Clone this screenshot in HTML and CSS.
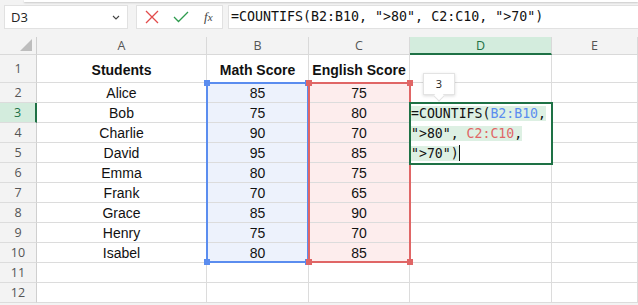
FILE: index.html
```html
<!DOCTYPE html>
<html lang="en">
<head>
    <meta charset="UTF-8">
    <title>COUNTIFS</title>
    <link rel="stylesheet" href="styles.css">
</head>
<body>
    <div class="topline"></div>

    <!-- Formula bar -->
    <div class="formula-bar">
        <div class="name-box">
            <span>D3</span>
            <svg class="chev" width="8" height="5" viewBox="0 0 8 5"><path d="M1 1 L4 4 L7 1" fill="none" stroke="#444" stroke-width="1.1"/></svg>
        </div>
        <div class="fx-buttons">
            <svg width="14" height="14" viewBox="0 0 14 14"><path d="M1 1 L13 13 M13 1 L1 13" stroke="#e24b4b" stroke-width="1.3"/></svg>
            <svg width="16" height="12" viewBox="0 0 16 12"><path d="M1 6 L5.5 10.5 L15 1" fill="none" stroke="#2e9b4e" stroke-width="1.3"/></svg>
            <span class="fx"><i>f</i><i>x</i></span>
        </div>
        <div class="formula-input">=COUNTIFS(B2:B10, "&gt;80", C2:C10, "&gt;70")</div>
    </div>

    <!-- Sheet -->
    <div class="sheet">
        <div class="grid">
            <div class="corner"><span class="tri"></span></div>
            <div class="col-head">A</div>
            <div class="col-head">B</div>
            <div class="col-head">C</div>
            <div class="col-head active">D</div>
            <div class="col-head">E</div>

            <div class="row-head tall">1</div>
            <div class="cell tall bold">Students</div>
            <div class="cell tall bold">Math Score</div>
            <div class="cell tall bold">English Score</div>
            <div class="cell tall"></div>
            <div class="cell tall"></div>

            <div class="row-head">2</div><div class="cell">Alice</div><div class="cell blue">85</div><div class="cell red">75</div><div class="cell"></div><div class="cell"></div>
            <div class="row-head active">3</div><div class="cell">Bob</div><div class="cell blue">75</div><div class="cell red">80</div><div class="cell"></div><div class="cell"></div>
            <div class="row-head">4</div><div class="cell">Charlie</div><div class="cell blue">90</div><div class="cell red">70</div><div class="cell"></div><div class="cell"></div>
            <div class="row-head">5</div><div class="cell">David</div><div class="cell blue">95</div><div class="cell red">85</div><div class="cell"></div><div class="cell"></div>
            <div class="row-head">6</div><div class="cell">Emma</div><div class="cell blue">80</div><div class="cell red">75</div><div class="cell"></div><div class="cell"></div>
            <div class="row-head">7</div><div class="cell">Frank</div><div class="cell blue">70</div><div class="cell red">65</div><div class="cell"></div><div class="cell"></div>
            <div class="row-head">8</div><div class="cell">Grace</div><div class="cell blue">85</div><div class="cell red">90</div><div class="cell"></div><div class="cell"></div>
            <div class="row-head">9</div><div class="cell">Henry</div><div class="cell blue">75</div><div class="cell red">70</div><div class="cell"></div><div class="cell"></div>
            <div class="row-head">10</div><div class="cell">Isabel</div><div class="cell blue">80</div><div class="cell red">85</div><div class="cell"></div><div class="cell"></div>
            <div class="row-head">11</div><div class="cell"></div><div class="cell"></div><div class="cell"></div><div class="cell"></div><div class="cell"></div>
            <div class="row-head">12</div><div class="cell"></div><div class="cell"></div><div class="cell"></div><div class="cell"></div><div class="cell"></div>
        </div>

        <!-- Range highlights -->
        <div class="range range-b">
            <span class="h tl"></span><span class="h tr"></span><span class="h bl"></span><span class="h br"></span>
        </div>
        <div class="range range-c">
            <span class="h tl"></span><span class="h tr"></span><span class="h bl"></span><span class="h br"></span>
        </div>

        <!-- Tooltip -->
        <div class="tip">3</div>

        <!-- In-cell editor -->
        <div class="editor"><span class="sel">=COUNTIFS(<b class="ref-b">B2:B10</b>, "&gt;80", <b class="ref-c">C2:C10</b>, "&gt;70")</span><span class="caret"></span></div>
    </div>
</body>
</html>
```

FILE: styles.css
```css
body {
    margin: 0;
    background-color: #f3f3f3;
    font-family: "Liberation Sans", Arial, sans-serif;
    overflow: hidden;
}
.topline {
    height: 2px;
    background-color: #fff;
    box-shadow: 0 1px 2px rgba(0, 0, 0, 0.18);
    margin: 0 0 0 24px;
}
/* Formula bar */
.formula-bar {
    display: flex;
    height: 24px;
    margin-top: 3px;
    padding-left: 4px;
}
.name-box {
    background-color: #fff;
    border: 1px solid #e1e1e1;
    display: flex;
    align-items: center;
    justify-content: space-between;
    padding: 0 7px 0 6px;
    box-sizing: border-box;
    width: 124px;
    font-family: "Open Sans", sans-serif;
    font-size: 13px;
    color: #222;
}
.fx-buttons {
    margin-left: 8px;
    width: 87px;
    box-sizing: border-box;
    background-color: #fff;
    border: 1px solid #e1e1e1;
    display: flex;
    align-items: center;
    gap: 14px;
    padding-left: 8px;
}
.fx {
    font-family: "Liberation Serif", serif;
    font-size: 13px;
    color: #444;
    margin-left: 1px;
}
.fx i:last-child {
    font-size: 11px;
}
.formula-input {
    flex: 1;
    margin-left: 5px;
    background-color: #fff;
    border: 1px solid #e1e1e1;
    border-right: none;
    font-family: "DejaVu Sans Mono", monospace;
    font-size: 13.3px;
    color: #111;
    line-height: 22px;
    padding-left: 2px;
    white-space: pre;
}
/* Sheet grid */
.sheet {
    position: relative;
    margin-top: 8px;
    background-color: #fff;
}
.grid {
    display: grid;
    grid-template-columns: 37px 170px 102px 101px 142px 1fr;
    grid-template-rows: 18px 28px repeat(11, 20px);
}
.corner, .col-head, .row-head {
    background-color: #f3f3f3;
    color: #555;
    font-family: "Open Sans", sans-serif;
    font-size: 12.5px;
    display: flex;
    align-items: center;
    justify-content: center;
    box-sizing: border-box;
    border-right: 1px solid #d9d9d9;
    border-bottom: 1px solid #d9d9d9;
}
.corner {
    position: relative;
    border-right: 1px solid #cfcfcf;
}
.tri {
    position: absolute;
    right: 4px;
    bottom: 3px;
    width: 0;
    height: 0;
    border-left: 12px solid transparent;
    border-bottom: 12px solid #bdbdbd;
}
.col-head.active {
    background-color: #d3ecdd;
    color: #1e7145;
    border-bottom: 2px solid #1e7145;
}
.row-head {
    border-right: 1px solid #cfcfcf;
    border-bottom: 1px solid #dcdcdc;
}
.row-head.active {
    background-color: #d3ecdd;
    color: #1e7145;
    border-right: 2px solid #1e7145;
}
.cell {
    box-sizing: border-box;
    border-right: 1px solid #dcdcdc;
    border-bottom: 1px solid #dcdcdc;
    display: flex;
    align-items: center;
    justify-content: center;
    font-size: 14px;
    color: #111;
    padding-top: 1px;
}
.cell.bold {
    font-weight: bold;
    padding-top: 3px;
}
.cell.blue {
    background-color: #edf2fc;
}
.cell.red {
    background-color: #fdeded;
}
/* Range borders */
.range {
    position: absolute;
    top: 45px;
    height: 181px;
    box-sizing: border-box;
    border: 2px solid;
}
.range-b {
    left: 206px;
    width: 103px;
    border-color: #5b8def;
}
.range-c {
    left: 308px;
    width: 103px;
    border-color: #e06666;
}
.h {
    position: absolute;
    width: 6px;
    height: 6px;
}
.range-b .h { background-color: #5b8def; }
.range-c .h { background-color: #e06666; }
.h.tl { left: -4px; top: -4px; }
.h.tr { right: -4px; top: -4px; }
.h.bl { left: -4px; bottom: -4px; }
.h.br { right: -4px; bottom: -4px; }
/* Tooltip */
.tip {
    position: absolute;
    left: 423px;
    top: 36px;
    width: 32px;
    height: 22px;
    background-color: #fff;
    border: 1px solid #e3e3e3;
    box-shadow: 0 1px 3px rgba(0, 0, 0, 0.15);
    box-sizing: border-box;
    font-family: "Open Sans", sans-serif;
    font-size: 11px;
    color: #222;
    text-align: center;
    line-height: 20px;
}
.tip::after {
    content: "";
    position: absolute;
    left: 11px;
    bottom: -6px;
    width: 8px;
    height: 8px;
    background-color: #fff;
    border-right: 1px solid #e3e3e3;
    border-bottom: 1px solid #e3e3e3;
    transform: rotate(45deg);
    box-sizing: border-box;
}
/* In-cell editor */
.editor {
    position: absolute;
    left: 409px;
    top: 65px;
    width: 144px;
    height: 63px;
    box-sizing: border-box;
    border: 2px solid #1e7145;
    background-color: #fff;
    font-family: "DejaVu Sans Mono", monospace;
    font-size: 13.2px;
    line-height: 20px;
    color: #111;
    padding: 0;
}
.sel {
    background-color: #ddf0e3;
}
.editor b {
    font-weight: normal;
}
.ref-b { color: #5b8def; }
.ref-c { color: #e06666; }
.caret {
    display: inline-block;
    width: 1px;
    height: 16px;
    background-color: #111;
    vertical-align: -3px;
}
```
